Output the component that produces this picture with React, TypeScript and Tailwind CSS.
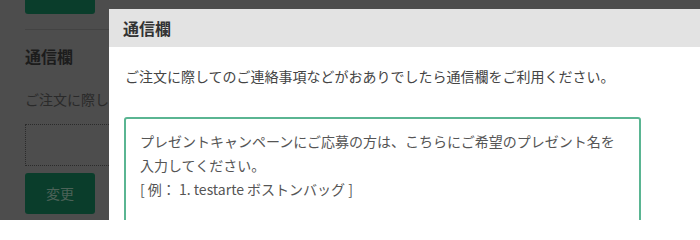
import React from "react";

const font = { fontFamily: '"Noto Sans CJK JP", "Noto Sans", sans-serif' };

export default function App() {
  return (
    <div
      className="relative w-[700px] h-[220px] overflow-hidden bg-[#4d4d4d]"
      style={font}
    >
      {/* Page behind the modal (dimmed) */}
      <div className="flex flex-col px-[25px]">
        <div className="w-[70px] h-[14px] rounded-b-[3px] bg-[#0a3d2b]" />
        <div className="mt-[15px] border-t border-[#434343]" />
        <h2 className="mt-[14px] text-[16px] leading-[24px] font-bold text-[#1c1c1c]">
          通信欄
        </h2>
        <p className="mt-[19px] text-[14px] leading-[24px] text-[#2a2a2a] whitespace-nowrap">
          ご注文に際してのご連絡事項などがおありでしたら通信欄をご利用ください。
        </p>
        <div className="mt-[13px] h-[42px] w-[600px] border border-dotted border-[#2b2b2b]" />
        <button className="mt-[7px] w-[70px] h-[41px] rounded-[3px] bg-[#0a3d2b] text-[14px] text-[#4c6258] flex items-center justify-center">
          変更
        </button>
      </div>

      {/* Modal */}
      <div className="absolute left-[109px] top-[9px] w-[640px] h-[260px] bg-white flex flex-col">
        <div className="h-[38px] bg-[#e3e3e3] flex items-center px-[14px]">
          <h3 className="text-[16px] font-bold text-[#333333] leading-[24px]">
            通信欄
          </h3>
        </div>
        <div className="flex flex-col pl-[16px] pt-[17px]">
          <p className="text-[14px] leading-[24px] text-[#444444] whitespace-nowrap">
            ご注文に際してのご連絡事項などがおありでしたら通信欄をご利用ください。
          </p>
          <textarea
            className="mt-[29px] -ml-[1px] w-[517px] h-[140px] resize-none rounded-[3px] border-2 border-[#5ab592] outline-none pt-[10px] px-[14px] text-[14px] leading-[24px] text-[#555555] placeholder:text-[#555555]"
            style={font}
            placeholder={
              "プレゼントキャンペーンにご応募の方は、こちらにご希望のプレゼント名を\n入力してください。\n[ 例： 1. testarte ボストンバッグ ]"
            }
          />
        </div>
      </div>
    </div>
  );
}
